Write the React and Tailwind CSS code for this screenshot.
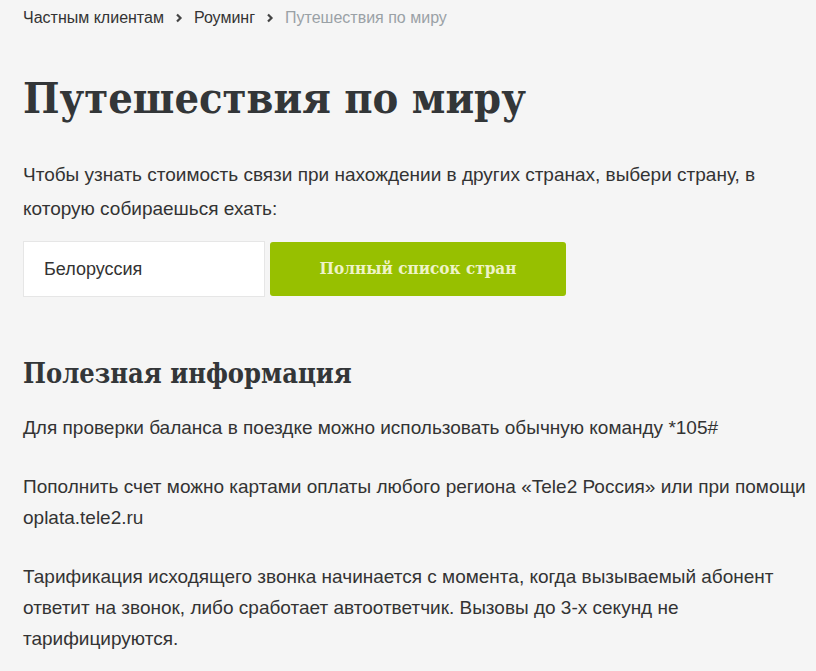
import React from "react";

const slab = {
  fontFamily: '"DejaVu Serif Condensed", "DejaVu Serif", "Liberation Serif", serif',
  fontStretch: "condensed",
};

const crumbs = ["Частным клиентам", "Роуминг"];

const Chevron = () => (
  <svg width="8" height="10" viewBox="0 0 8 10" className="mx-[11px]">
    <path d="M2 1.5 L5.5 5 L2 8.5" fill="none" stroke="#444" strokeWidth="2.2" />
  </svg>
);

export default function App() {
  return (
    <div
      className="min-h-[671px] overflow-hidden bg-[#f5f5f5] pl-[23px] text-[#333]"
      style={{ fontFamily: '"Liberation Sans", Arial, sans-serif' }}
    >
      <div className="w-[800px]">
        <nav className="flex items-center pt-[8px] text-[16px] leading-[20px]">
          {crumbs.map((c) => (
            <React.Fragment key={c}>
              <span>{c}</span>
              <Chevron />
            </React.Fragment>
          ))}
          <span className="text-[#9aa1a6]">Путешествия по миру</span>
        </nav>

        <h1
          className="mt-[40px] text-[43px] font-bold leading-[60px] text-[#333638]"
          style={slab}
        >
          Путешествия по миру
        </h1>

        <p className="mt-[30px] text-[19px] leading-[34px]">
          Чтобы узнать стоимость связи при нахождении в других странах, выбери страну, в
          которую собираешься ехать:
        </p>

        <div className="mt-[15px] flex gap-[5px]">
          <div className="flex h-[56px] w-[242px] items-center border border-[#e6e6e6] bg-white px-[20px] text-[18px]">
            Белоруссия
          </div>
          <button
            className="mt-[1px] h-[54px] w-[296px] rounded-[3px] bg-[#97c000] text-[17px] font-bold text-[#eef3c8]"
            style={slab}
          >
            Полный список стран
          </button>
        </div>

        <h2
          className="mt-[57px] text-[27px] font-bold leading-[40px] text-[#333638]"
          style={slab}
        >
          Полезная информация
        </h2>

        <div className="mt-[18px] flex flex-col gap-[28px] text-[19px] leading-[31px]">
          <p>Для проверки баланса в поездке можно использовать обычную команду *105#</p>
          <p>
            Пополнить счет можно картами оплаты любого региона «Tele2 Россия» или при помощи
            oplata.tele2.ru
          </p>
          <p>
            Тарификация исходящего звонка начинается с момента, когда вызываемый абонент
            ответит на звонок, либо сработает автоответчик. Вызовы до 3-х секунд не
            тарифицируются.
          </p>
        </div>
      </div>
    </div>
  );
}
